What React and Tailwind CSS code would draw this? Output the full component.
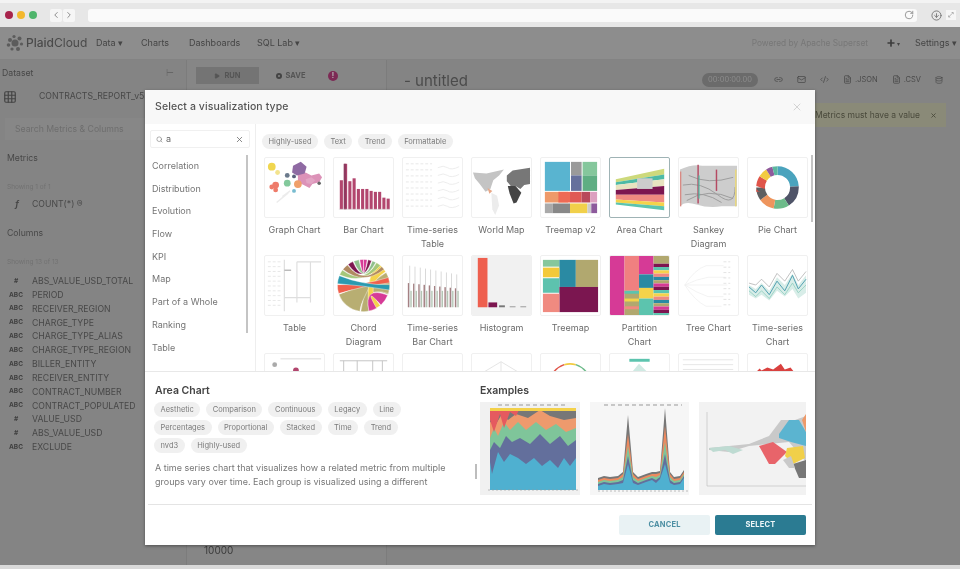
import React from "react";
import { ChevronLeft, ChevronRight, RotateCw, ArrowDownCircle, Search, X, Link2, Mail, Code2, FileText, Database, Play, Plus, Grid3x3 } from "lucide-react";

const categories = ["Correlation", "Distribution", "Evolution", "Flow", "KPI", "Map", "Part of a Whole", "Ranking", "Table"];
const filterTags = ["Highly-used", "Text", "Trend", "Formattable"];
const tagRows = [
  ["Aesthetic", "Comparison", "Continuous", "Legacy", "Line"],
  ["Percentages", "Proportional", "Stacked", "Time", "Trend"],
  ["nvd3", "Highly-used"],
];
const columns = [
  ["#", "ABS_VALUE_USD_TOTAL"],
  ["ABC", "PERIOD"],
  ["ABC", "RECEIVER_REGION"],
  ["ABC", "CHARGE_TYPE"],
  ["ABC", "CHARGE_TYPE_ALIAS"],
  ["ABC", "CHARGE_TYPE_REGION"],
  ["ABC", "BILLER_ENTITY"],
  ["ABC", "RECEIVER_ENTITY"],
  ["ABC", "CONTRACT_NUMBER"],
  ["ABC", "CONTRACT_POPULATED"],
  ["#", "VALUE_USD"],
  ["#", "ABS_VALUE_USD"],
  ["ABC", "EXCLUDE"],
];

const Rects = ({ items }) => items.map(([x, y, w, h, fill], i) => <rect key={i} x={x} y={y} width={w} height={h} fill={fill} />);

const faintRows = (n, x1, x2, c = "#ddd") =>
  Array.from({ length: n }, (_, i) => <line key={i} x1={x1} x2={x2} y1={6 + i * (50 / n)} y2={6 + i * (50 / n)} stroke={c} strokeWidth="0.7" strokeDasharray="3 2" />);

const GraphArt = () => (
  <>
    <path d="M34 17l8-2 6 3 8-2 3 4-3 5-7 2-3 4-6-3-6-3z" fill="#dc92b8" />
    <path d="M29 8l8-4 6 5-2 7-8 2-5-3z" fill="#8f6aa3" />
    <path d="M42 22l6-2 4 3-4 4-5-1z" fill="#e2a5c4" />
    <circle cx="7" cy="9" r="4" fill="#f0d64f" />
    <circle cx="13" cy="15" r="2.5" fill="#f3e38d" />
    <circle cx="23" cy="18" r="2.5" fill="#6b7a8c" />
    <circle cx="11" cy="28" r="3.5" fill="#ee7b6a" />
    <circle cx="7" cy="30" r="2.5" fill="#ee7b6a" />
    <circle cx="11" cy="33" r="2.5" fill="#ee7b6a" />
    <circle cx="23" cy="26" r="3.5" fill="#83c99c" />
    <circle cx="34" cy="27" r="4" fill="#f0a06a" />
    <circle cx="30" cy="19" r="2" fill="#5a5f7c" />
    <circle cx="56" cy="26" r="1.8" fill="#666" />
    <circle cx="30" cy="34" r="2" fill="#78bcd0" />
    <path d="M12 46l12-10M18 40l8-6" stroke="#ececec" strokeWidth="1.5" />
  </>
);

const BarArt = () => {
  const bars = [30, 47, 29, 32, 21, 21, 21, 19, 18, 18, 12, 11];
  return (
    <>
      {bars.map((h, i) => <rect key={i} x={6 + i * 4.4} y={53 - h} width="3.2" height={h} fill="#b2466e" />)}
      <rect x="10" y="6" width="2.6" height="47" fill="#8f3a60" />
      <line x1="5" x2="58" y1="53" y2="53" stroke="#ccc" strokeWidth="0.5" />
    </>
  );
};

const TimeTableArt = () => (
  <>
    {faintRows(8, 3, 30)}
    {[10, 18, 26, 34, 42, 50].map((y) => <path key={y} d={`M36 ${y}q6 -3 10 0t12 -1`} stroke="#e4e4e4" fill="none" strokeWidth="0.7" />)}
  </>
);

const WorldArt = () => (
  <>
    <path d="M1 15l14 1 18-4-5 6-6 5-3 9-5 3-6-8-5-6z" fill="#c4c4c4" />
    <path d="M20 36l6 3 2 10-4 10-3-6z" fill="#ececec" />
    <path d="M36 18l6-5 18-3v17l-6 1-4 4-5-3-4 1-5-6z" fill="#777" />
    <path d="M37 29l8 0 6 7-5 10-3 1-4-10z" fill="#444" />
    <path d="M16 31l5 3-3 3z" fill="#e8a888" />
  </>
);

const TreemapV2Art = () => (
  <Rects items={[
    [4, 4, 26, 30, "#59b4d0"], [31, 4, 11, 14, "#9a9a9a"], [43, 4, 15, 14, "#85c79c"],
    [31, 18, 11, 16, "#66709c"], [43, 18, 15, 16, "#5fae83"], [4, 35, 24, 11, "#ee9a6a"],
    [18, 35, 12, 11, "#ee6a55"], [30, 35, 12, 11, "#e05a55"], [42, 35, 9, 11, "#b84a5a"], [51, 35, 7, 11, "#dca0c0"],
    [4, 47, 8, 10, "#aaa"], [12, 47, 18, 10, "#888"], [30, 47, 18, 10, "#f1d04a"], [48, 47, 4, 10, "#ccc"], [52, 47, 6, 10, "#8d5a9c"],
  ]} />
);

const AreaArt = () => (
  <>
    <path d="M6 22L56 11V17L6 25z" fill="#cdd97c" />
    <path d="M6 25L56 17V22L6 28z" fill="#4dbaa6" />
    <path d="M6 28L56 22V29L6 33z" fill="#e8e3c0" />
    <path d="M6 33L56 29V38L6 38z" fill="#7d1650" />
    <path d="M6 38L56 38V46L6 43z" fill="#f08a80" />
    <path d="M6 43L56 46V50L6 46z" fill="#f4d34b" />
    <path d="M6 46L56 50V54L6 48z" fill="#5cc4ae" />
    <rect x="28" y="21" width="16" height="11" fill="#ccc" />
  </>
);

const SankeyArt = () => (
  <>
    <path d="M1 12Q14 6 24 8H60V50H44Q30 52 18 48T1 50z" fill="#cdcdcd" />
    <path d="M4 28Q22 24 40 38T58 30M6 38Q26 34 44 46M10 18Q30 28 56 20M8 44Q30 30 56 42" stroke="#9c9c9c" strokeWidth="1" fill="none" />
    <rect x="19" y="7" width="1.5" height="40" fill="#b54a63" />
    <rect x="38" y="12" width="1.5" height="22" fill="#b54a63" />
    <rect x="20" y="18" width="1.2" height="24" fill="#4ab8a0" />
    <rect x="58" y="12" width="1.4" height="38" fill="#ead878" />
    <rect x="1" y="14" width="1.4" height="36" fill="#d88a84" />
  </>
);

const PieArt = () => {
  const segs = [["#4aa3bd", 0, 24], ["#4f5468", 24, 17], ["#6dbb8a", 41, 12], ["#ee955d", 53, 12], ["#5f6062", 65, 10], ["#e0554a", 75, 9], ["#f2cb42", 84, 7], ["#8f5a9c", 91, 5], ["#5cb8a0", 96, 4]];
  return (
    <g transform="rotate(-90 30.5 30.5)">
      {segs.map(([c, s, l]) => (
        <circle key={c} cx="30.5" cy="30.5" r="17.5" fill="none" stroke={c} strokeWidth="9" pathLength="100" strokeDasharray={`${l} ${100 - l}`} strokeDashoffset={-s} />
      ))}
    </g>
  );
};

const TableArt = () => (
  <>
    {faintRows(10, 3, 18)}
    <path d="M20 4V57M33 6V48M47 6V48M33 6H58M20 43H47" stroke="#dedede" strokeWidth="1.2" fill="none" />
    <rect x="20" y="14" width="7" height="1.5" fill="#bbb" />
  </>
);

const polar = (deg, r = 27) => {
  const a = ((deg - 90) * Math.PI) / 180;
  return `${(30.5 + r * Math.cos(a)).toFixed(1)} ${(30.5 + r * Math.sin(a)).toFixed(1)}`;
};
const chord = (a1, a2, b1, b2) =>
  `M${polar(a1)}A27 27 0 0 1 ${polar(a2)}Q30.5 30.5 ${polar(b1)}A27 27 0 0 1 ${polar(b2)}Q30.5 30.5 ${polar(a1)}z`;

const ChordArt = () => {
  const chords = [
    [188, 250, 62, 110, "#b8ae72"], [60, 108, 168, 186, "#b8ae72"], [30, 58, 140, 165, "#f4d34b"], [112, 138, 150, 168, "#d63a96"],
    [252, 272, 72, 84, "#f0604c"], [274, 292, 88, 100, "#2a9ab0"], [294, 306, 30, 40, "#a5c77a"], [308, 322, 44, 52, "#b08a60"],
    [324, 336, 10, 18, "#7d1650"], [338, 350, 20, 28, "#8fbf8c"], [352, 360, 0, 8, "#d63a96"],
  ];
  return (
    <>
      {chords.map(([a1, a2, b1, b2, c], i) => <path key={i} d={chord(a1, a2, b1, b2)} fill={c} stroke="white" strokeWidth="0.4" />)}
    </>
  );
};

const TimeBarArt = () => (
  <>
    {[0, 1, 2, 3, 4, 5, 6, 7, 8, 9].map((i) => (
      <g key={i}>
        <rect x={5 + i * 5.4} y={28 + i * 0.6} width="1.5" height={25 - i * 0.6} fill="#a58083" />
        <rect x={6.6 + i * 5.4} y={10 + i} width="0.8" height={43 - i} fill="#cfcfcf" />
        <rect x={7.6 + i * 5.4} y={36} width="1.4" height="17" fill="#b3c5b4" />
      </g>
    ))}
  </>
);

const HistogramArt = () => (
  <>
    <rect x="0" y="0" width="61" height="61" fill="#f1f1f1" />
    <rect x="6" y="2" width="10" height="51" fill="#ee5f4e" />
    <rect x="17" y="48" width="9" height="5" fill="#7d1650" />
    <rect x="28" y="51" width="6" height="2" fill="#777" />
    <rect x="39" y="52" width="6" height="1" fill="#999" />
    <rect x="50" y="52" width="6" height="1" fill="#999" />
  </>
);

const TreemapArt = () => (
  <Rects items={[
    [2, 4, 17, 7, "#86c79c"], [19, 4, 17, 28, "#2a8aa3"], [36, 4, 23, 28, "#b1a86f"], [2, 12, 17, 10, "#f3c93a"],
    [2, 23, 17, 15, "#5dc2ae"], [19, 32, 40, 26, "#7b1650"], [2, 39, 17, 19, "#f08a80"],
  ]} />
);

const PartitionArt = () => {
  const stripe = ["#7d1650", "#5cc4ae", "#f4d34b", "#f08a80", "#2a8aa3", "#b1a86f", "#d63a96"];
  return (
    <>
      <Rects items={[
        [0, 0, 15, 61, "#d63a96"], [15, 0, 15, 36, "#f08080"], [30, 0, 15, 19, "#d63a96"], [15, 36, 15, 25, "#b1a86f"],
        [30, 19, 15, 14, "#2a8aa3"], [30, 33, 15, 11, "#f4d34b"], [30, 44, 15, 17, "#5cc4ae"], [45, 0, 16, 8, "#b1a86f"],
      ]} />
      {Array.from({ length: 16 }, (_, i) => <rect key={i} x="45" y={8 + i * 3.4} width="16" height="3.4" fill={stripe[i % 7]} />)}
      {[36, 44, 52].map((y, i) => <rect key={y} x="15" y={y} width="15" height="3" fill={stripe[i + 1]} />)}
    </>
  );
};

const TreeArt = () => (
  <>
    <path d="M6 30Q16 14 28 10M6 30Q18 24 30 22M6 30H32M6 30Q18 38 30 42M6 30Q16 46 28 52M28 10H46M30 22H48M32 30H50M30 42H46M28 52H44" stroke="#f0f0f0" strokeWidth="0.8" fill="none" />
    {faintRows(9, 46, 53, "#d5d5d5")}
  </>
);

const TimeSeriesArt = () => (
  <>
    <path d="M1 30L8 34 14 28 22 36 30 22 38 30 46 18 52 30 60 20V38L52 44 46 34 38 42 30 36 22 46 14 40 8 44 1 40z" fill="#d8ede8" />
    <path d="M1 32L8 38 14 30 22 40 30 26 38 36 46 20 52 34 60 24" stroke="#4f9fb0" strokeWidth="1" fill="none" />
    <path d="M1 28L8 30 14 24 22 32 30 18 38 26 46 14 52 26 60 16" stroke="#a5a5a5" strokeWidth="0.7" fill="none" />
    <path d="M1 36L8 42 14 36 22 44 30 32 38 40 46 28 52 38 60 30" stroke="#8ccdbd" strokeWidth="0.8" fill="none" />
  </>
);

const row3 = [
  <g key="a"><circle cx="10" cy="11" r="2.5" fill="#aaa" /><circle cx="32" cy="17" r="3" fill="#b2466e" /><path d="M16 5H58" stroke="#ccc" strokeWidth="0.7" /></g>,
  <path key="b" d="M6 7H55M10 7V19M24 7V19M40 7V19M50 7V19" stroke="#c4c4c4" strokeWidth="1" fill="none" />,
  null,
  <path key="d" d="M30 8L10 20M30 8L50 20M30 8V20" stroke="#e4e4e4" fill="none" />,
  <g key="e" fill="none" strokeWidth="1.6">
    <path d="M10 24A24 24 0 0 1 24 11" stroke="#e0554a" />
    <path d="M24 11A24 24 0 0 1 36 11" stroke="#f2cb42" />
    <path d="M36 11A24 24 0 0 1 50 24" stroke="#6dbb8a" />
  </g>,
  <g key="f"><rect x="20" y="5" width="21" height="3" fill="#5cc4ae" /><path d="M20 22L30 10 42 22z" fill="#cfeae3" /></g>,
  <path key="g" d="M4 6H56M4 11H56M4 16H56" stroke="#e0e0e0" strokeWidth="0.8" />,
  <path key="h" d="M8 19L12 15 14 17 20 14 26 16 34 10 38 16 44 14 48 19z" fill="#d9413f" />,
];

const thumbs = [
  ["Graph Chart", <GraphArt />], ["Bar Chart", <BarArt />], ["Time-series Table", <TimeTableArt />], ["World Map", <WorldArt />],
  ["Treemap v2", <TreemapV2Art />], ["Area Chart", <AreaArt />, true], ["Sankey Diagram", <SankeyArt />], ["Pie Chart", <PieArt />],
  ["Table", <TableArt />], ["Chord Diagram", <ChordArt />], ["Time-series Bar Chart", <TimeBarArt />], ["Histogram", <HistogramArt />],
  ["Treemap", <TreemapArt />], ["Partition Chart", <PartitionArt />], ["Tree Chart", <TreeArt />], ["Time-series Chart", <TimeSeriesArt />],
];

function VizThumb({ label, art, selected }) {
  return (
    <div className="w-[61px] text-center">
      <div className={`w-[61px] h-[61px] bg-white rounded-[2px] overflow-hidden border ${selected ? "border-[#9fb3b5]" : "border-[#f0f0f0]"}`}>
        <svg viewBox="0 0 61 61" className="w-full h-full">{art}</svg>
      </div>
      <div className="mt-[5px] h-[28px] text-[9px] leading-[14px] text-[#6b6b6b]">{label}</div>
    </div>
  );
}

function Tag({ children }) {
  return <span className="h-[15px] px-[6.5px] rounded-full bg-[#f0f0f0] text-[#7a7a7a] text-[7.5px] leading-[15px]">{children}</span>;
}

function ExampleOne() {
  return (
    <svg viewBox="0 0 100 93" className="w-[100px] h-[93px] bg-[#f1f1f1]">
      <rect x="10" y="6" width="86" height="82" fill="#4fb0d0" />
      <path d="M10 6H96V56L90 64 84 56 78 66 70 58 62 64 54 56 46 62 38 56 30 52 24 60 18 50 12 72 10 60z" fill="#636f9c" />
      <path d="M10 6H96V38L88 44 80 34 70 42 60 32 50 42 40 36 32 40 26 34 20 46 14 40 10 48z" fill="#7fc59a" />
      <path d="M10 6H96V26L86 30 76 22 66 28 56 20 46 28 38 20 30 28 24 20 18 34 14 26 10 36z" fill="#ee9a6d" />
      <path d="M10 6H96V16L84 18 70 14 60 8 48 16 36 12 28 18 22 12 16 22 10 20z" fill="#777" />
      <path d="M10 6H40L36 14 30 10 24 26 20 12 14 30 10 18z" fill="#e55a5f" />
      <rect x="10" y="6" width="86" height="3" fill="#f3d14a" />
      <path d="M8 88H98" stroke="#999" strokeWidth="0.6" strokeDasharray="2 2" />
      <path d="M18 3H88" stroke="#999" strokeWidth="1" strokeDasharray="4 3" />
    </svg>
  );
}

// layers of the second example, biggest first, spikes around x=38 and x=75
const spikeLayer = (base, bump, p1, p2) =>
  `M8 88V${base}L14 ${base - 2}L20 ${base - 1}L28 ${base - 2}L33 ${base - bump}L38 ${p1}L43 ${base - bump}L48 ${base - 1}L56 ${base - 4}L62 ${base - 6}L66 ${base - bump}L70 ${base - 7}L75 ${p2}L80 ${base - bump}L84 ${base - 1}L90 ${base - 2}L94 ${base - 8}V88z`;

function ExampleTwo() {
  return (
    <svg viewBox="0 0 99 93" className="w-[99px] h-[93px] bg-[#f6f6f6]">
      <path d={spikeLayer(76, 6, 13, 6)} fill="#777" />
      <path d={spikeLayer(78, 6, 32, 24)} fill="#ee8a5f" />
      <path d={spikeLayer(80, 5, 44, 40)} fill="#7fc59a" />
      <path d={spikeLayer(82, 4, 54, 52)} fill="#636f9c" />
      <path d={spikeLayer(84, 3, 62, 62)} fill="#4fb0d0" />
      <path d="M14 3H92" stroke="#999" strokeWidth="1" strokeDasharray="4 3" />
      <path d="M8 89H100" stroke="#999" strokeWidth="0.6" strokeDasharray="2 2" />
    </svg>
  );
}

function ExampleThree() {
  return (
    <svg viewBox="0 0 107 93" className="w-[107px] h-[93px] bg-[#f2f2f2]">
      <path d="M10 46Q30 44 50 42L70 34 82 18 96 18 107 14V60L90 40 70 42 50 44 30 50 10 48z" fill="#c9c9c9" />
      <path d="M80 32L90 18H100L107 30V44L92 40 80 36z" fill="#5bb4d0" />
      <path d="M60 44L74 40 88 50 76 62 70 62z" fill="#e8646a" />
      <path d="M88 46L104 44 106 56 94 62 86 54z" fill="#f1d04a" />
      <path d="M94 62L107 58V76L100 76z" fill="#777" />
      <path d="M84 58L92 54 96 66 90 66z" fill="#c9c9c9" />
      <path d="M103 18L107 12V30z" fill="#ee9a6a" />
      <path d="M10 46L30 44 44 48 34 52 26 48 14 50z" fill="#bedbd2" />
      <path d="M8 10V84H107" stroke="#bbb" strokeWidth="0.6" fill="none" />
    </svg>
  );
}

function LogoMark() {
  return (
    <svg viewBox="0 0 18 18" className="w-[18px] h-[18px]" fill="#5c5c5c">
      <circle cx="9" cy="9" r="3.5" />
      <circle cx="4" cy="6" r="2" /><circle cx="8" cy="2.5" r="1.6" /><circle cx="13.5" cy="4.5" r="2" />
      <circle cx="15.5" cy="10" r="1.6" /><circle cx="12" cy="15" r="2" /><circle cx="6" cy="15" r="1.6" /><circle cx="2.5" cy="11" r="1.8" />
    </svg>
  );
}

function BackgroundApp() {
  return (
    <>
      <div className="h-[33px] bg-[#8d8d8d] border-b border-[#838383] flex items-center text-[9px] text-[#454545]">
        <div className="w-[90px] pl-[6px] flex items-center gap-[2px] text-[12px] text-[#4a4a4a]">
          <LogoMark />
          <span className="font-medium">Plaid<span className="font-normal">Cloud</span></span>
        </div>
        <span className="ml-[6px] w-[45px]">Data ▾</span>
        <span className="w-[48px]">Charts</span>
        <span className="w-[68px]">Dashboards</span>
        <span>SQL Lab ▾</span>
        <span className="ml-auto text-[8.3px] text-[#777]">Powered by Apache Superset</span>
        <Plus size={10} strokeWidth={4} className="ml-[18px] text-[#3d3d3d]" />
        <span className="text-[6px] ml-[1px]">▾</span>
        <span className="ml-[15px] mr-[3px]">Settings ▾</span>
      </div>
      <div className="flex-1 flex min-h-0 bg-[#848484]">
        <div className="w-[187px] border-r border-[#7c7c7c] pl-[2px] pt-[7px] text-[8.7px] text-[#484848]">
          <div className="flex justify-between pr-[12px] h-[13px]"><span>Dataset</span><span className="text-[#666]">⊢</span></div>
          <div className="flex items-center mt-[7px] h-[20px]">
            <Grid3x3 size={14} className="ml-[1px] text-[#444]" />
            <span className="ml-[22px]">CONTRACTS_REPORT_v5</span>
          </div>
          <div className="mt-[11px] h-[22px] ml-[3px] pl-[10px] leading-[22px] text-[#6e6e6e] bg-[#878787]">Search Metrics &amp; Columns</div>
          <div className="mt-[12px] ml-[5px]">Metrics</div>
          <div className="mt-[18px] ml-[5px] text-[6.5px] text-[#727272]">Showing 1 of 1</div>
          <div className="mt-[5px] flex"><span className="w-[30px] text-center italic font-bold">f</span><span>COUNT(*) ®</span></div>
          <div className="mt-[16px] ml-[5px]">Columns</div>
          <div className="mt-[18px] ml-[5px] text-[6.5px] text-[#727272]">Showing 13 of 13</div>
          <div className="mt-[7px]">
            {columns.map(([type, name]) => (
              <div key={name} className="flex items-center h-[13.85px]">
                <span className="w-[30px] pl-[6px] pr-[8px] text-center text-[6.5px] font-bold text-[#3f3f3f]">{type}</span>
                <span>{name}</span>
              </div>
            ))}
          </div>
        </div>
        <div className="w-[200px] border-r border-[#7c7c7c] bg-[#868686] relative">
          <div className="flex items-center mt-[7px] ml-[9px] text-[7.5px] font-bold text-[#555]">
            <div className="w-[63px] h-[17px] bg-[#747474] flex items-center justify-center gap-[4px]"><Play size={6} fill="#555" />RUN</div>
            <div className="w-[63px] h-[17px] flex items-center justify-center gap-[4px]"><span className="w-[6px] h-[6px] rounded-full border-2 border-[#444]" />SAVE</div>
            <span className="ml-[6px] w-[10px] h-[10px] rounded-full bg-[#7d2a55] text-[7px] text-[#bbb] leading-[10px] text-center">!</span>
          </div>
          <div className="absolute left-[17px] top-[483px] text-[10px] text-[#3c3c3c]">10000</div>
        </div>
        <div className="flex-1 relative">
          <div className="flex items-center justify-between pl-[17px] pr-[17px] pt-[11px] text-[#4b4b4b]">
            <span className="text-[15px] leading-[20px]">- untitled</span>
            <div className="flex items-center gap-[14px] text-[7.5px] text-[#4a4a4a] -mt-[3px]">
              <span className="w-[56px] h-[14px] mr-[2px] rounded-full bg-[#6b6b6b] text-center leading-[14px] text-[#8d8d8d]">00:00:00.00</span>
              <Link2 size={9} /><Mail size={9} /><Code2 size={9} />
              <span className="flex items-center gap-[3px]"><FileText size={9} />.JSON</span>
              <span className="flex items-center gap-[3px]"><FileText size={9} />.CSV</span>
              <Database size={8} />
            </div>
          </div>
          <div className="absolute right-[14px] top-[43px] h-[24px] w-[150px] bg-[#8a8a78] flex items-center justify-end gap-[10px] pr-[9px] text-[8.5px] text-[#4a4a3c]">
            <span>Metrics must have a value</span><X size={7} strokeWidth={3} />
          </div>
        </div>
      </div>
    </>
  );
}

export default function App() {
  return (
    <div className="relative w-[960px] h-[569px] overflow-hidden flex flex-col bg-[#e6e6e6] font-['Inter',sans-serif] blur-[0.4px]">
      <div className="h-[27px] shrink-0 bg-[#e7e7e7] border-t-[3px] border-[#f3f3f3] flex items-center pl-[5px] pr-[4px]">
        <span className="w-[8px] h-[8px] rounded-full bg-[#a8244c]" />
        <span className="ml-[4px] w-[8px] h-[8px] rounded-full bg-[#f3b82e]" />
        <span className="ml-[4px] w-[8px] h-[8px] rounded-full bg-[#4fb56c]" />
        <span className="ml-[13px] w-[12px] h-[13px] bg-[#f6f6f6] rounded-[2px] flex items-center justify-center"><ChevronLeft size={10} className="text-[#777]" /></span>
        <span className="ml-[1px] w-[12px] h-[13px] bg-[#f6f6f6] rounded-[2px] flex items-center justify-center"><ChevronRight size={10} className="text-[#777]" /></span>
        <div className="ml-[13px] flex-1 h-[13px] bg-[#fafafa] rounded-[3px] flex items-center justify-end pr-[3px]"><RotateCw size={10} className="text-[#888]" /></div>
        <ArrowDownCircle size={11} className="ml-[14px] text-[#777]" />
        <span className="ml-[4px] w-[10px] h-[10px] bg-[#f6f6f6] text-[7px] leading-[10px] text-center text-[#777]">⤢</span>
      </div>
      <BackgroundApp />
      <div className="h-[4px] shrink-0 bg-[#d9d9d9]" />

      <div className="absolute left-[145px] top-[90px] w-[670px] h-[455px] bg-white shadow-[0_1px_3px_rgba(0,0,0,0.4)] flex flex-col">
        <div className="h-[34px] shrink-0 bg-[#f8f8f8] flex items-center justify-between pl-[10px] pr-[12px]">
          <span className="text-[10.5px] font-medium text-[#555555] tracking-[0.1px]">Select a visualization type</span>
          <X size={12} strokeWidth={1.2} className="text-[#bbbbbb]" />
        </div>
        <div className="h-[248px] shrink-0 flex overflow-hidden border-b border-[#e8e8e8]">
          <div className="w-[111px] shrink-0 border-r border-[#eeeeee] relative">
            <div className="mt-[6px] ml-[5px] w-[100px] h-[18px] border border-[#f0f0f0] rounded-[2px] flex items-center pl-[5px] pr-[5px] text-[9px] text-[#666]">
              <Search size={7} className="text-[#777]" />
              <span className="ml-[3px]">a</span>
              <X size={9} className="ml-auto text-[#666]" />
            </div>
            <div className="mt-[7px] ml-[7px] text-[9px] text-[#747474]">
              {categories.map((c) => <div key={c} className="h-[22.7px] leading-[22.7px]">{c}</div>)}
            </div>
            <div className="absolute left-[101px] top-[31px] w-[2px] h-[178px] bg-[#c4c4c4]" />
          </div>
          <div className="flex-1 relative pt-[10px] pl-[8px] overflow-hidden">
            <div className="flex gap-[6px] -ml-[2px] mb-[8px]">{filterTags.map((t) => <Tag key={t}>{t}</Tag>)}</div>
            <div className="grid grid-cols-[repeat(8,61px)] gap-x-[8px] gap-y-[4px]">
              {thumbs.map(([label, art, selected]) => <VizThumb key={label} label={label} art={art} selected={selected} />)}
              {row3.map((art, i) => (
                <div key={i} className="w-[61px] h-[61px] border border-[#f0f0f0] rounded-[2px] overflow-hidden">
                  <svg viewBox="0 0 61 61" className="w-full h-full">{art}</svg>
                </div>
              ))}
            </div>
            <div className="absolute right-[2px] top-[31px] w-[2px] h-[67px] bg-[#c4c4c4]" />
          </div>
        </div>
        <div className="h-[133px] shrink-0 mx-[3px] border-b border-[#e4e4e4] flex pl-[7px] relative">
          <div className="w-[325px] shrink-0 pt-[12px]">
            <div className="text-[10.5px] leading-[14px] font-semibold text-[#444444]">Area Chart</div>
            <div className="mt-[4px] -ml-[1px] flex flex-col gap-[3px]">
              {tagRows.map((row) => <div key={row[0]} className="flex gap-[6px]">{row.map((t) => <Tag key={t}>{t}</Tag>)}</div>)}
            </div>
            <p className="mt-[8px] w-[300px] text-[9px] leading-[14px] text-[#777777]">A time series chart that visualizes how a related metric from multiple groups vary over time. Each group is visualized using a different</p>
          </div>
          <div className="absolute left-[327px] top-[92px] w-[2px] h-[15px] bg-[#bdbdbd]" />
          <div className="pt-[12px]">
            <div className="text-[10.5px] leading-[14px] font-semibold text-[#444444]">Examples</div>
            <div className="mt-[4px] flex gap-[10px]">
              <ExampleOne /><ExampleTwo /><ExampleThree />
            </div>
          </div>
        </div>
        <div className="flex-1 flex justify-end items-start gap-[5px] pt-[10px] pr-[9px] text-[7.5px] font-bold tracking-[0.2px]">
          <div className="w-[91px] h-[20px] rounded-[2px] bg-[#e9f2f4] text-[#4d8fa3] text-center leading-[20px]">CANCEL</div>
          <div className="w-[91px] h-[20px] rounded-[2px] bg-[#2b7b92] text-[#eef6f8] text-center leading-[20px]">SELECT</div>
        </div>
      </div>
    </div>
  );
}
